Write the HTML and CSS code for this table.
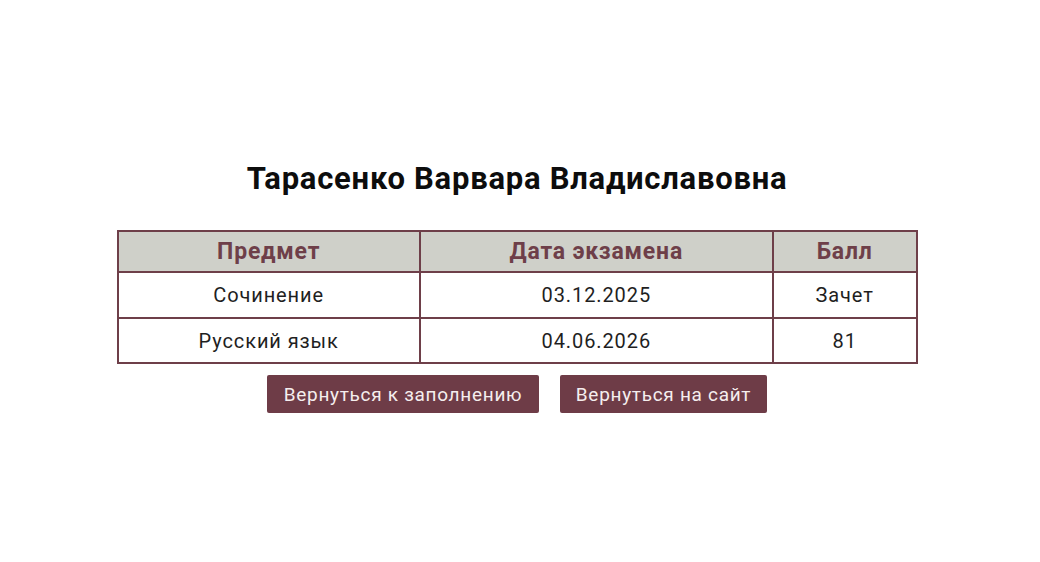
FILE: index.html
```html
<!DOCTYPE html>
<html lang="ru">
<head>
<meta charset="utf-8">
<title>Результаты</title>
<link rel="stylesheet" href="styles.css">
</head>
<body>
<main class="page">
  <h1 class="title">Тарасенко Варвара Владиславовна</h1>
  <table class="results">
    <thead>
      <tr>
        <th class="c1">Предмет</th>
        <th class="c2">Дата экзамена</th>
        <th class="c3">Балл</th>
      </tr>
    </thead>
    <tbody>
      <tr>
        <td>Сочинение</td>
        <td>03.12.2025</td>
        <td>Зачет</td>
      </tr>
      <tr class="last">
        <td>Русский язык</td>
        <td>04.06.2026</td>
        <td>81</td>
      </tr>
    </tbody>
  </table>
  <div class="actions">
    <a class="btn btn-wide" href="#">Вернуться к заполнению</a>
    <a class="btn" href="#">Вернуться на сайт</a>
  </div>
</main>
</body>
</html>
```
FILE: styles.css
```css
html, body {
  margin: 0;
  padding: 0;
  background: #ffffff;
}
body {
  font-family: Roboto, "Liberation Sans", Arial, sans-serif;
  color: #1f1f1f;
  padding-right: 6px;
}
.page {
  display: flex;
  flex-direction: column;
  align-items: center;
  padding-top: 160px;
}
.title {
  margin: 0 0 32px;
  font-size: 31px;
  line-height: 38px;
  letter-spacing: 0.75px;
  font-weight: 700;
  color: #0d0d0d;
}
.results {
  width: 801px;
  border-collapse: collapse;
  border: 2px solid #6e3f49;
}
.results th,
.results td {
  border: 2px solid #6e3f49;
  text-align: center;
  padding: 0;
}
.results th {
  background: #cfd0c9;
  color: #6e3f49;
  font-size: 23px;
  letter-spacing: 0.8px;
  font-weight: 700;
  height: 39px;
}
.results td {
  font-size: 20px;
  letter-spacing: 0.9px;
  height: 44px;
  color: #1f1f1f;
}
.results .last td {
  height: 43px;
}
.results .c1 { width: 301px; }
.results .c2 { width: 352px; }
.results .c3 { width: 142px; }
.actions {
  display: flex;
  gap: 21px;
  margin-top: 11px;
}
.btn {
  display: flex;
  align-items: center;
  justify-content: center;
  height: 38px;
  width: 207px;
  box-sizing: border-box;
  background: #6e3c47;
  color: #f5eeee;
  text-decoration: none;
  font-size: 19px;
  letter-spacing: 0.7px;
  border-radius: 2px;
}
.btn-wide {
  width: 272px;
}
```
